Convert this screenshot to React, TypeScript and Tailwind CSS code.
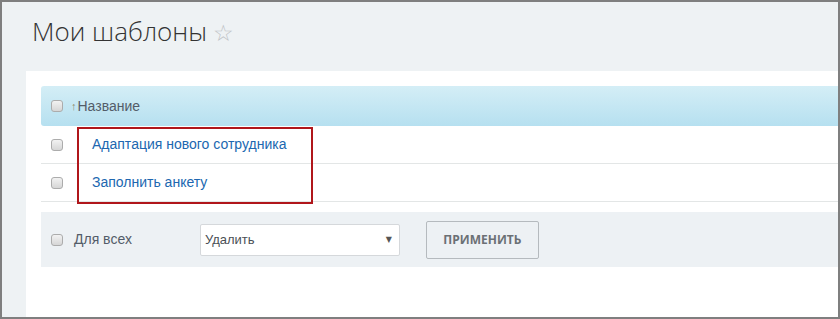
import React from "react";

function Box() {
  return (
    <span className="block w-[12px] h-[12px] rounded-[3px] border border-[#acacac] bg-gradient-to-b from-[#f2f2f2] to-[#d6d6d6] shrink-0" />
  );
}

export default function App() {
  return (
    <div className="w-[840px] h-[319px] box-border border-2 border-[#7f7f7f] bg-[#eef2f4] flex flex-col overflow-hidden">
      <div className="h-[69px] pl-[30px] pt-[11px] shrink-0">
        <h1 className="flex items-baseline leading-[36px] text-[26px] font-light text-[#333] font-['Open_Sans',sans-serif]">
          <span>Мои шаблоны</span>
          <span className="ml-[6px] text-[23px] text-[#bfc3c6] font-['DejaVu_Sans',sans-serif]">☆</span>
        </h1>
      </div>
      <div className="flex-1 ml-[24px] bg-white pt-[15px] pl-[15px] font-['Liberation_Sans',Arial,sans-serif]">
        <div className="relative">
          <div className="h-[40px] rounded-l-[3px] bg-gradient-to-b from-[#d4eef6] to-[#b6e0f0] flex items-center pl-[10px]">
            <Box />
            <span className="ml-[8px] mr-[1px] text-[11px] text-[#8c8a6c] leading-none">↑</span>
            <span className="text-[14px] text-[#535c69]">Название</span>
          </div>
          <div className="h-[38px] border-b border-[#e3e6e6] flex items-center pl-[10px]">
            <Box />
            <a className="ml-[29px] text-[14px] text-[#2067b0]">Адаптация нового сотрудника</a>
          </div>
          <div className="h-[38px] border-b border-[#e3e6e6] flex items-center pl-[10px]">
            <Box />
            <a className="ml-[29px] text-[14px] text-[#2067b0]">Заполнить анкету</a>
          </div>
          <div className="absolute left-[36px] top-[41px] w-[236px] h-[77px] border-2 border-[#b0161b]" />
        </div>
        <div className="mt-[10px] h-[55px] bg-[#edf1f4] flex items-center pl-[10px]">
          <Box />
          <span className="ml-[11px] text-[14px] text-[#535c69]">Для всех</span>
          <div className="ml-[68px] w-[200px] h-[32px] bg-white border border-[#d5d8db] rounded-[2px] flex items-center justify-between pl-[4px] pr-[7px]">
            <span className="text-[13px] text-[#4a4f55]">Удалить</span>
            <span className="text-[8px] text-[#555] font-['DejaVu_Sans',sans-serif]">▼</span>
          </div>
          <button className="ml-[26px] w-[113px] h-[38px] border border-[#b5babe] rounded-[2px] bg-[#edf1f4] text-[12px] font-bold text-[#6b7075] font-['Open_Sans',sans-serif]">
            ПРИМЕНИТЬ
          </button>
        </div>
      </div>
    </div>
  );
}
